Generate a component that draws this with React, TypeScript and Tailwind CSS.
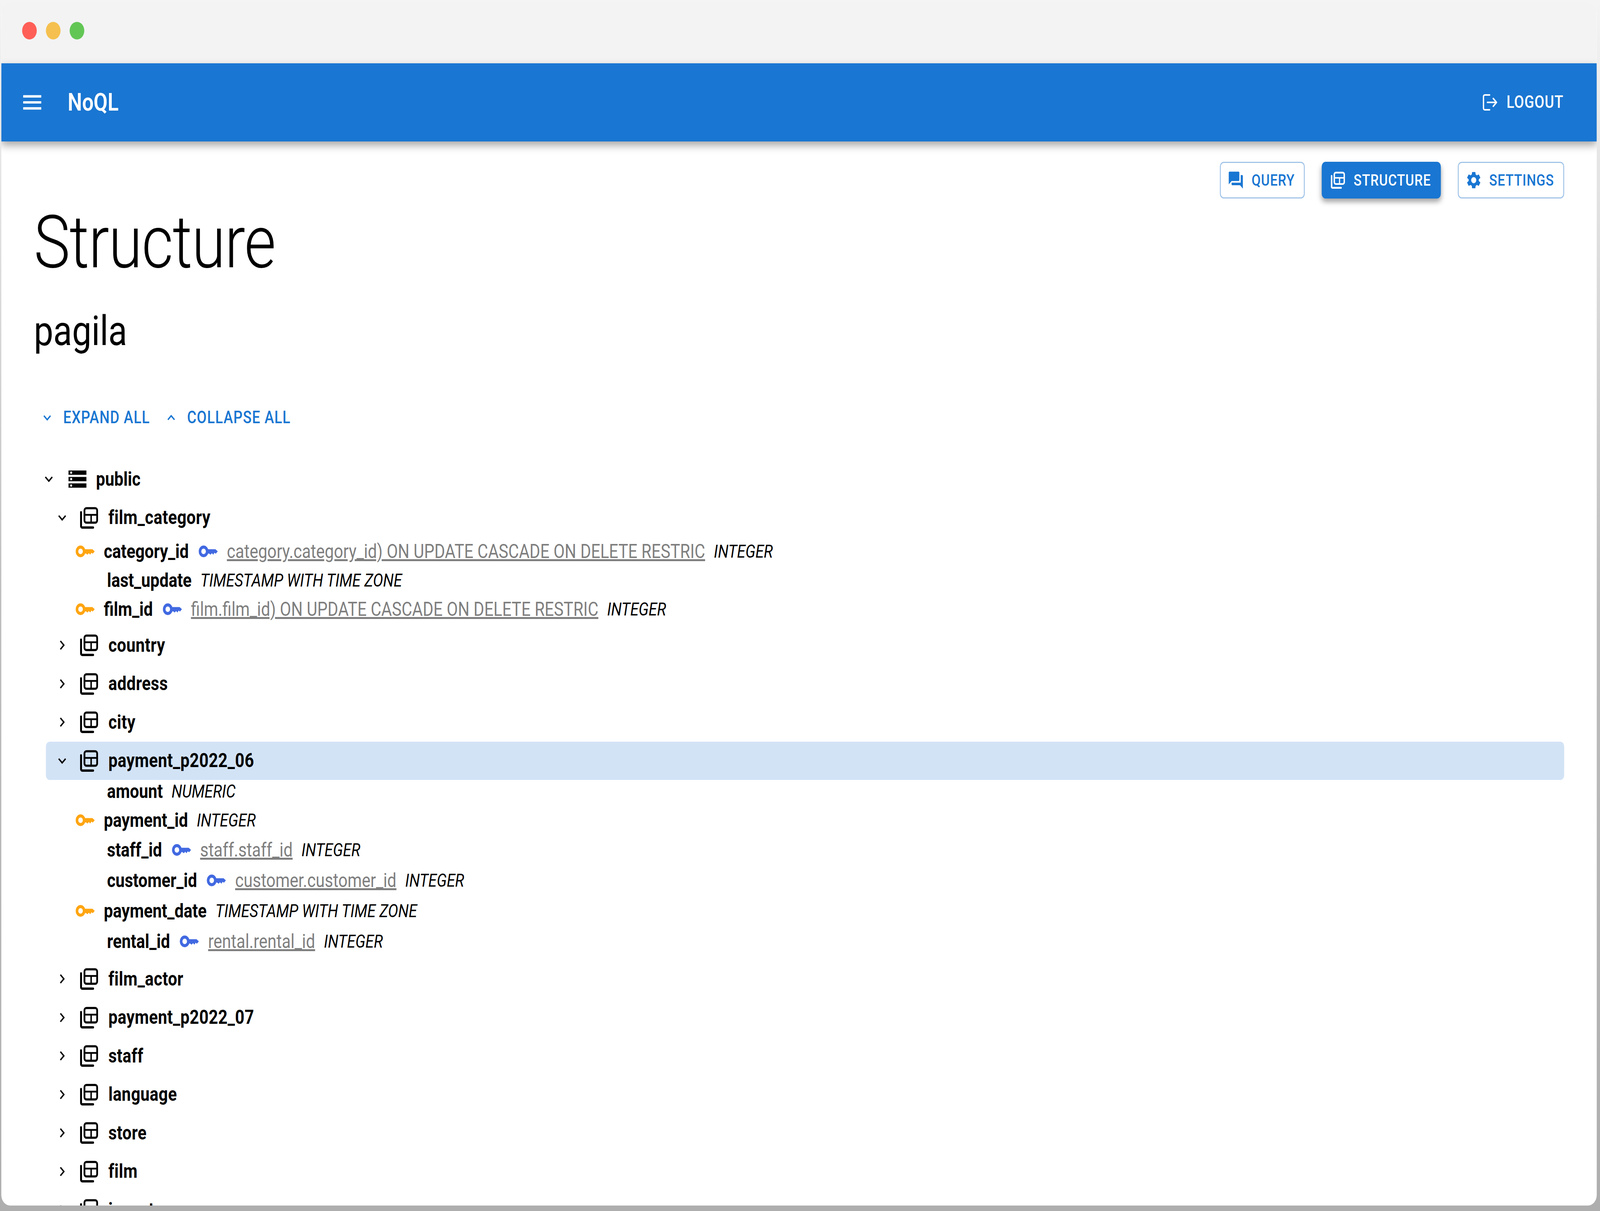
import React from "react";
import { MdMenu, MdQuestionAnswer, MdSettings, MdExpandMore, MdExpandLess, MdChevronRight, MdStorage } from "react-icons/md";

function TableIcon({ className = "" }: { className?: string }) {
  return (
    <svg viewBox="0 0 56 56" className={className} fill="none" stroke="currentColor">
      <rect x="13.5" y="3.5" width="39" height="37" rx="6" strokeWidth="5.5" />
      <path d="M14 20.5H52M34 20.5V40" strokeWidth="4.5" />
      <path d="M3 14V49a4 4 0 0 0 4 4H40" strokeWidth="6" strokeLinecap="round" />
    </svg>
  );
}

function KeyIcon({ className = "" }: { className?: string }) {
  return (
    <svg viewBox="0 0 60 32" className={className} fill="currentColor">
      <circle cx="15.5" cy="16" r="11" fill="none" stroke="currentColor" strokeWidth="8" />
      <path d="M25 10.5H52L59 16L53 22L49 19.5L45 24.5L41 20.5L37 24.5L32 21.5H25Z" />
    </svg>
  );
}

function LogoutIcon() {
  return (
    <svg viewBox="0 0 46 42" className="w-[46px] h-[42px]" fill="none" stroke="currentColor" strokeWidth="4" strokeLinecap="round" strokeLinejoin="round">
      <path d="M22 2H7a4 4 0 0 0-4 4V36a4 4 0 0 0 4 4H22" />
      <path d="M15 21H43M33 11L43 21L33 31" />
    </svg>
  );
}

type Col = { name: string; pk?: boolean; fk?: string; type: string; tall?: boolean };

const FC: Col[] = [
  { name: "category_id", pk: true, fk: "category.category_id) ON UPDATE CASCADE ON DELETE RESTRIC", type: "INTEGER" },
  { name: "last_update", type: "TIMESTAMP WITH TIME ZONE" },
  { name: "film_id", pk: true, fk: "film.film_id) ON UPDATE CASCADE ON DELETE RESTRIC", type: "INTEGER" },
];

const PAY: Col[] = [
  { name: "amount", type: "NUMERIC" },
  { name: "payment_id", pk: true, type: "INTEGER" },
  { name: "staff_id", fk: "staff.staff_id", type: "INTEGER", tall: true },
  { name: "customer_id", fk: "customer.customer_id", type: "INTEGER", tall: true },
  { name: "payment_date", pk: true, type: "TIMESTAMP WITH TIME ZONE", tall: true },
  { name: "rental_id", fk: "rental.rental_id", type: "INTEGER", tall: true },
];

function Column({ c }: { c: Col }) {
  return (
    <div className={`flex items-center ${c.tall ? "h-[78px]" : "h-[74px]"} ${c.pk ? "pl-[91px]" : "pl-[188px]"}`}>
      {c.pk && <KeyIcon className="w-[60px] h-[32px] mr-[27px] text-[#ffa511]" />}
      <span className="font-bold">{c.name}</span>
      {c.fk && <KeyIcon className="w-[60px] h-[32px] ml-[30px] mr-[27px] text-[#4169e1]" />}
      {c.fk && <span className="text-[#7f7f7f] underline">{c.fk}</span>}
      <span className="italic ml-[27px] text-[46.7px]">{c.type}</span>
    </div>
  );
}

function Table({ name, open, active, cols, colsClass = "" }: { name: string; open?: boolean; active?: boolean; cols?: Col[]; colsClass?: string }) {
  return (
    <div>
      <div className={`flex items-center h-[98.5px] pl-[25px] rounded-[12px] ${active ? "bg-[#d3e3f6]" : ""}`}>
        <span className="w-[50px] flex justify-center">
          {open ? <MdExpandMore size={48} /> : <MdChevronRight size={48} />}
        </span>
        <TableIcon className="w-[56px] h-[56px] ml-[30px] mr-[31px]" />
        <span className="font-bold tracking-[0.5px]">{name}</span>
      </div>
      {cols && (
        <div className={colsClass}>
          {cols.map((c) => (
            <Column key={c.name} c={c} />
          ))}
        </div>
      )}
    </div>
  );
}

function NavButton({ icon, label, active }: { icon: React.ReactNode; label: string; active?: boolean }) {
  return (
    <button
      className={`flex items-center h-[94px] rounded-[12px] text-[40.6px] font-medium tracking-[1.16px] ${
        active
          ? "pl-[28px] pr-[30px] gap-[26px] bg-[#1976d2] text-white shadow-[0_9px_14px_rgba(0,0,0,0.35)]"
          : "pl-[20px] pr-[28px] gap-[22px] border-[3px] border-[#a3c5e8] text-[#1976d2] bg-white"
      }`}
    >
      {icon}
      {label}
    </button>
  );
}

export default function App() {
  // The browser may cap the window's width below the reference's 4916px; fit the page to what it really has.
  const fit = window.innerWidth / 4916;
  return (
    <div className="w-screen h-[3099px] overflow-hidden">
      <div
        className="w-[4916px] h-[3099px] origin-top-left bg-gradient-to-b from-[#f4f4f4] via-[#bdbdbd] to-[#aeaeae] overflow-hidden font-['Roboto',sans-serif] text-[50px] text-black"
        style={{ transform: `scaleX(${fit})` }}
      >
        <div className="ml-[4px] mt-[6px] w-[4902px] h-[3079px] bg-white rounded-[27px] overflow-hidden flex flex-col">
          <div className="h-[156px] shrink-0 bg-[#f3f3f3] flex items-center gap-[28px] pl-[64px] pb-[12px]">
            <span className="w-[45px] h-[45px] rounded-full bg-[#ff5f57]" />
            <span className="w-[45px] h-[45px] rounded-full bg-[#f5c04f]" />
            <span className="w-[45px] h-[45px] rounded-full bg-[#62c655]" />
          </div>
          <header className="relative z-10 h-[200px] shrink-0 bg-[#1976d2] text-white flex items-center justify-between pl-[58px] pr-[102px] shadow-[0_10px_22px_rgba(0,0,0,0.35)]">
            <div className="flex items-center">
              <MdMenu size={74} />
              <span className="ml-[72px] text-[62.5px] font-semibold">NoQL</span>
            </div>
            <div className="flex items-center gap-[28px] text-[43.75px] font-medium tracking-[1.25px]">
              <LogoutIcon />
              LOGOUT
            </div>
          </header>
          <main className="flex-1 min-h-0 overflow-hidden pl-[100px] pr-[100px] pt-[52px]">
            <div className="flex justify-end gap-[52px]">
              <NavButton icon={<MdQuestionAnswer size={52} />} label="QUERY" />
              <NavButton icon={<TableIcon className="w-[44px] h-[44px]" />} label="STRUCTURE" active />
              <NavButton icon={<MdSettings size={52} />} label="SETTINGS" />
            </div>
            <h2 className="text-[187.5px] font-light leading-[225px] tracking-[-1.56px]">Structure</h2>
            <h4 className="mt-[48px] text-[106.25px] leading-[131px]">pagila</h4>
            <div className="mt-[100px] flex items-center h-[114px] text-[43.75px] font-medium tracking-[1.4px] text-[#1976d2] pl-[18px]">
              <MdExpandMore size={46} className="mr-[26px]" />
              <span>EXPAND ALL</span>
              <MdExpandLess size={46} className="ml-[42px] mr-[26px]" />
              <span>COLLAPSE ALL</span>
            </div>
            <div className="mt-[51px] flex items-center h-[98.5px] pl-[21px]">
              <span className="w-[50px] flex justify-center">
                <MdExpandMore size={48} />
              </span>
              <MdStorage size={66} className="ml-[30px] mr-[24px]" />
              <span className="font-bold">public</span>
            </div>
            <div className="ml-[37px]">
              <Table name="film_category" open cols={FC} colsClass="mb-[6px]" />
              <Table name="country" />
              <Table name="address" />
              <Table name="city" />
              <Table name="payment_p2022_06" open active cols={PAY} colsClass="-mt-[8px] mb-[8px]" />
              <Table name="film_actor" />
              <Table name="payment_p2022_07" />
              <Table name="staff" />
              <Table name="language" />
              <Table name="store" />
              <Table name="film" />
              <Table name="inventory" />
            </div>
          </main>
        </div>
      </div>
    </div>
  );
}
